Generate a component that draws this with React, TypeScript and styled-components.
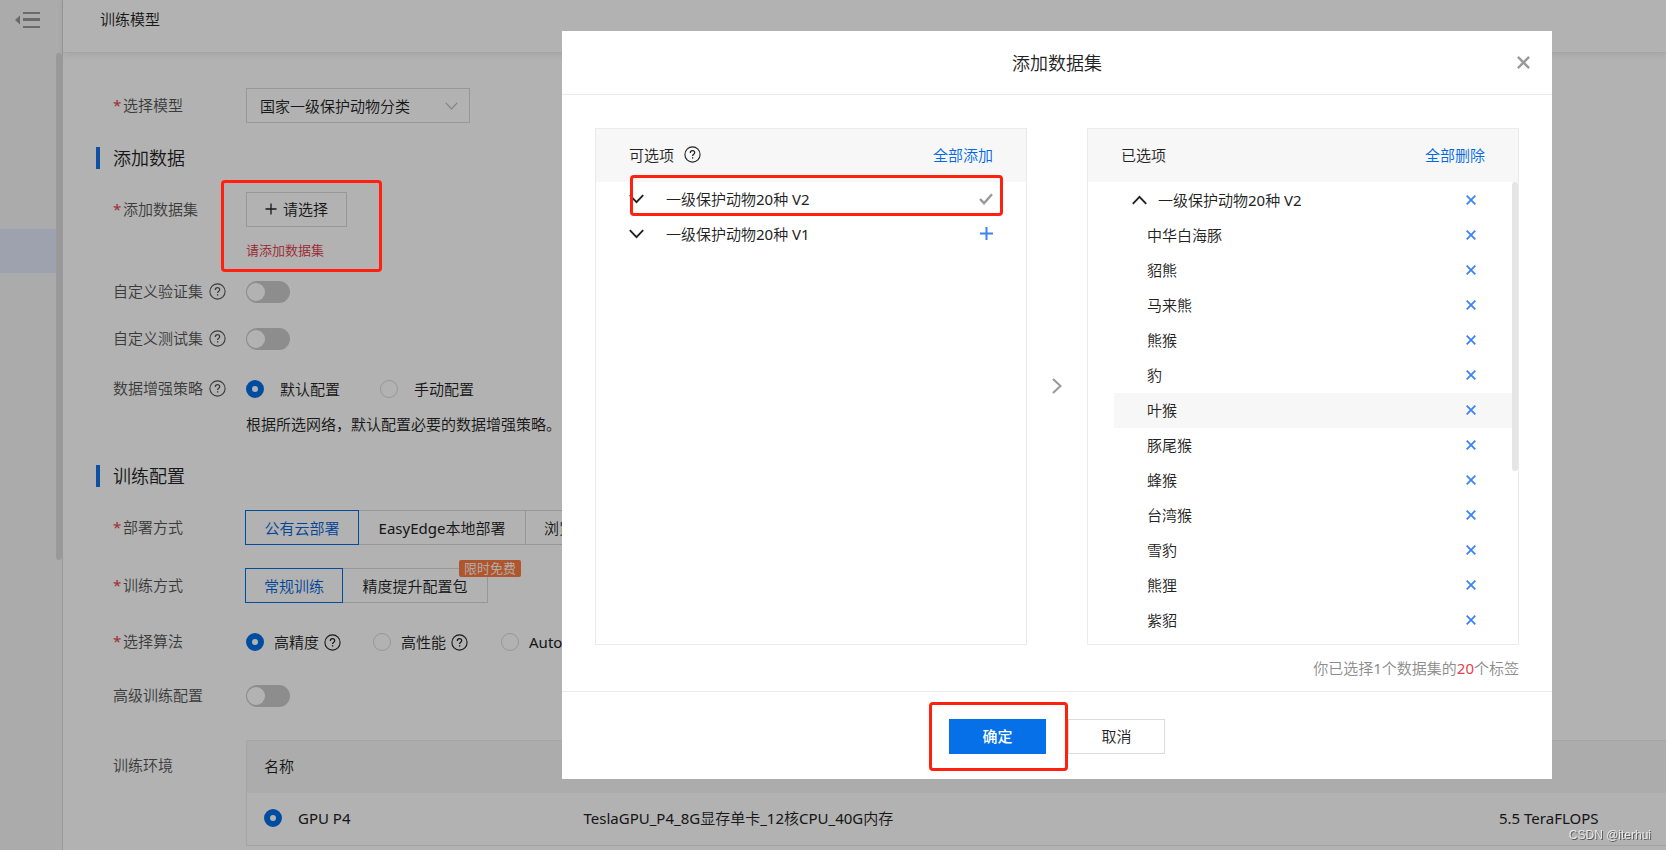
import React, { useState } from "react";
import styled, { createGlobalStyle, css } from "styled-components";

const Global = createGlobalStyle`
  *, *::before, *::after { box-sizing: border-box; }
  html, body, #root { height: 100%; }
  body {
    margin: 0;
    overflow: hidden;
    background: #fff;
    color: #222;
    font: 400 15px/20px "Noto Sans", "Noto Sans CJK SC DemiLight", "Noto Sans CJK SC", sans-serif;
  }
  button, input, select { font: inherit; color: inherit; }
  button { cursor: pointer; padding: 0; border: 0; background: none; }
  a { color: #0068e4; text-decoration: none; }
`;

/* ---------- icons ---------- */

const Icon = styled.svg`
  display: block;
  flex: none;
  fill: none;
  stroke: currentColor;
`;

const HelpIcon = () => (
  <Icon width="17" height="17" viewBox="0 0 17 17" aria-label="帮助">
    <circle cx="8.500" cy="8.500" r="7.600" strokeWidth="1.100" />
    <path d="M6.300 6.900c0-1.400 1-2.200 2.200-2.200s2.200.8 2.200 2c0 1.500-2.100 1.500-2.100 3.200" strokeWidth="1.200" />
    <path d="M8.600 11.200v1.400" strokeWidth="1.300" />
  </Icon>
);

const CrossIcon = ({ size = 10 }: { size?: number }) => (
  <Icon width={size} height={size} viewBox="0 0 10 10">
    <path d="M.7.7l8.600 8.600M9.300.7L.7 9.300" strokeWidth="1.800" />
  </Icon>
);

const ChevronIcon = ({ up }: { up?: boolean }) => (
  <Icon width="15" height="10" viewBox="0 0 15 10">
    <path d={up ? "M.8 8.800l6.700-6.900 6.700 6.900" : "M.8 1.200l6.700 6.900 6.700-6.900"} strokeWidth="1.900" />
  </Icon>
);

/* ---------- page ---------- */

const Shell = styled.div`
  display: flex;
  height: 100%;
`;

const Sidebar = styled.aside`
  flex: none;
  width: 63px;
  background: #f5f5f5;
  border-right: 1px solid #dcdcdc;
`;

const CollapseButton = styled.button`
  display: block;
  height: 53px;
  padding: 12px 0 25px 15px;
  color: #999;
`;

const SideScroll = styled.div`
  display: flex;
  justify-content: space-between;
  height: 507px;
`;

const SideItem = styled.a`
  flex: 1;
  height: 44px;
  margin-top: 176px;
  background: #e1e8f9;
`;

const Thumb = styled.div<{ $color: string; $height: number }>`
  flex: none;
  width: 6px;
  height: ${(p) => p.$height}px;
  border-radius: 3px;
  background: ${(p) => p.$color};
`;

const Main = styled.main`
  flex: 1;
  min-width: 0;
`;

const Header = styled.header`
  height: 53px;
  padding: 9px 37px;
  border-bottom: 1px solid #ececec;
  box-shadow: 0 2px 6px rgba(0, 0, 0, 0.08);
`;

const PageTitle = styled.h1`
  margin: 0;
  font-size: 15px;
  line-height: 20px;
  font-weight: inherit;
`;

const Form = styled.form`
  padding: 35px 0 0 33px;
`;

const SectionTitle = styled.h2`
  display: flex;
  align-items: center;
  gap: 13px;
  height: 22px;
  margin: 24px 0 23px;
  font-size: 18px;
  font-weight: inherit;
  &::before {
    content: "";
    width: 4px;
    height: 22px;
    background: #1673e8;
  }
`;

const Row = styled.div<{ $gap?: number; $height?: number }>`
  display: flex;
  align-items: center;
  height: ${(p) => p.$height ?? 35}px;
  margin-bottom: ${(p) => p.$gap ?? 0}px;
  padding-left: 17px;
`;

const Label = styled.label<{ $required?: boolean }>`
  display: flex;
  align-items: center;
  flex: none;
  gap: ${(p) => (p.$required ? 4 : 6)}px;
  width: 133px;
  padding-bottom: 2px;
  color: #555;
  ${(p) =>
    p.$required &&
    css`
      &::before {
        content: "*";
        width: 6px;
        color: #e8404f;
      }
    `}
`;

const SelectBox = styled.div`
  display: grid;
  align-items: center;
  width: 224px;
  color: #bbb;
  & > * { grid-area: 1 / 1; }
  & > svg { justify-self: end; margin-right: 12px; pointer-events: none; }
`;

const Select = styled.select`
  width: 100%;
  height: 35px;
  padding: 0 13px;
  border: 1px solid #d9d9d9;
  border-radius: 0;
  background: #fff;
  color: #222;
  appearance: none;
`;

const OutlineButton = styled.button`
  display: flex;
  align-items: center;
  justify-content: center;
  gap: 6px;
  width: 101px;
  height: 35px;
  padding-bottom: 2px;
  border: 1px solid #d9d9d9;
`;

const ErrorText = styled.p`
  margin: 0 0 21px 150px;
  padding-top: 13px;
  font-size: 13px;
  line-height: 20px;
  color: #e03446;
`;

const Switch = styled.input`
  appearance: none;
  display: flex;
  align-items: center;
  width: 44px;
  height: 22px;
  margin: 0;
  padding: 0 1px;
  border-radius: 11px;
  background: #cbcbcb;
  &::before {
    content: "";
    width: 18px;
    height: 18px;
    border-radius: 50%;
    background: #fff;
  }
  &:checked { justify-content: flex-end; background: #006fe6; }
`;

const Radio = styled.input`
  appearance: none;
  flex: none;
  width: 18px;
  height: 18px;
  margin: 0;
  border: 1px solid #d9d9d9;
  border-radius: 50%;
  background: #fff;
  &:checked { border: 6px solid #006fe6; }
`;

const RadioLabel = styled.label<{ $gap: number; $after: number }>`
  display: flex;
  align-items: center;
  gap: ${(p) => p.$gap}px;
  margin-right: ${(p) => p.$after}px;
  white-space: nowrap;
`;

const WithHelp = styled.span`
  display: flex;
  align-items: center;
  gap: 5px;
`;

const Hint = styled.p`
  margin: 0 0 31px 150px;
`;

const Segments = styled.div`
  display: flex;
  margin-left: -1px;
`;

const Segment = styled.button<{ $active?: boolean; $width: number }>`
  position: relative;
  width: ${(p) => p.$width}px;
  height: 35px;
  border: 1px solid ${(p) => (p.$active ? "#006fe6" : "#d9d9d9")};
  border-left-width: ${(p) => (p.$active ? 1 : 0)}px;
  color: ${(p) => (p.$active ? "#0064dc" : "#222")};
  white-space: nowrap;
`;

const Badge = styled.span`
  position: absolute;
  top: -9px;
  right: -34px;
  padding: 0 5px;
  border-radius: 2px;
  background: #fb7b41;
  color: #fff;
  font-size: 13px;
  line-height: 17px;
`;

const EnvRow = styled.div`
  display: flex;
  align-items: flex-start;
  padding: 13px 0 0 17px;
  & > label { padding-top: 15px; }
`;

const EnvTable = styled.table`
  flex: 1;
  min-width: 0;
  table-layout: fixed;
  border-collapse: collapse;
  border: 1px solid #ececec;
  border-right: 0;
  th, td {
    height: 53px;
    padding: 0 0 2px 17px;
    border-bottom: 1px solid #e9e9e9;
    text-align: left;
    font-weight: inherit;
    white-space: nowrap;
  }
  th { height: 52px; background: #f6f6f6; border-bottom: 0; }
`;

/* ---------- dialog ---------- */

const Overlay = styled.div`
  position: fixed;
  inset: 0;
  display: flex;
  align-items: flex-start;
  justify-content: flex-end;
  padding: 31px 114px 0 0;
  background: rgba(0, 0, 0, 0.3);
`;

const Dialog = styled.section`
  width: 990px;
  background: #fff;
`;

const DialogHead = styled.header`
  display: grid;
  grid-template-columns: 1fr auto 1fr;
  align-items: center;
  height: 64px;
  padding: 0 22px;
  border-bottom: 1px solid #ebebeb;
`;

const DialogTitle = styled.h2`
  grid-column: 2;
  margin: 0;
  font-size: 18px;
  line-height: 24px;
  font-weight: inherit;
`;

const CloseButton = styled.button`
  justify-self: end;
  color: #999;
`;

const DialogBody = styled.div`
  padding: 33px 33px 0;
`;

const Transfer = styled.div`
  display: grid;
  grid-template-columns: 1fr 60px 1fr;
  height: 517px;
`;

const Panel = styled.div`
  border: 1px solid #ebebeb;
`;

const PanelHead = styled.div`
  display: flex;
  align-items: center;
  justify-content: space-between;
  height: 53px;
  padding: 0 33px 2px;
  background: #f7f7f7;
`;

const PanelTitle = styled.span`
  display: flex;
  align-items: center;
  gap: 10px;
`;

const Middle = styled.div`
  display: grid;
  place-items: center;
  padding-bottom: 2px;
  color: #999;
`;

const Scroller = styled.div`
  display: flex;
`;

const List = styled.ul<{ $top?: number }>`
  flex: 1;
  margin: 0;
  padding: ${(p) => p.$top ?? 0}px 0 0;
  list-style: none;
`;

const Item = styled.li<{ $kind: "source" | "parent" | "child"; $hover?: boolean }>`
  display: flex;
  align-items: center;
  height: 35px;
  gap: ${(p) => (p.$kind === "source" ? 22 : 11)}px;
  ${(p) => p.$kind === "source" && "padding: 0 33px 2px;"}
  ${(p) => p.$kind === "parent" && "margin-left: 26px; padding: 0 36px 2px 18px;"}
  ${(p) => p.$kind === "child" && "margin-left: 26px; padding: 0 36px 2px 33px;"}
  background: ${(p) => (p.$hover ? "#f7f7f7" : "transparent")};
`;

const ItemName = styled.span`
  flex: 1;
`;

const ItemAction = styled.button<{ $muted?: boolean }>`
  color: ${(p) => (p.$muted ? "#999" : "#3b82f6")};
`;

const Summary = styled.p`
  margin: 0;
  padding: 13px 0;
  text-align: right;
  color: #8c8c8c;
  em { font-style: normal; color: #e8404f; }
`;

const DialogFoot = styled.footer`
  display: flex;
  justify-content: center;
  gap: 22px;
  padding: 27px 0 25px;
  border-top: 1px solid #ebebeb;
`;

const FootButton = styled.button<{ $primary?: boolean }>`
  width: 97px;
  height: 35px;
  padding-bottom: 2px;
  border: 1px solid ${(p) => (p.$primary ? "#0570e8" : "#dcdcdc")};
  background: ${(p) => (p.$primary ? "#0570e8" : "#fff")};
  color: ${(p) => (p.$primary ? "#fff" : "#222")};
  ${(p) => p.$primary && 'font-family: "Noto Sans", "Noto Sans CJK SC", sans-serif; font-weight: 500;'}
`;

/* ---------- annotations laid over the page ---------- */

const Mark = styled.div<{ $x: number; $y: number; $w: number; $h: number }>`
  position: absolute;
  left: ${(p) => p.$x}px;
  top: ${(p) => p.$y}px;
  width: ${(p) => p.$w}px;
  height: ${(p) => p.$h}px;
  border: 3px solid #ff2010;
  border-radius: 4px;
  pointer-events: none;
`;

const Watermark = styled.div`
  position: fixed;
  right: 15px;
  bottom: 7px;
  font: 400 12px/16px "Liberation Sans", Arial, sans-serif;
  color: rgba(255, 255, 255, 0.75);
  text-shadow: 1px 1px 0 rgba(0, 0, 0, 0.5);
`;

const animals = ["中华白海豚", "貂熊", "马来熊", "熊猴", "豹", "叶猴", "豚尾猴", "蜂猴", "台湾猴", "雪豹", "熊狸", "紫貂"];

export default function App() {
  const [augment, setAugment] = useState("default");
  const [algo, setAlgo] = useState("precision");

  return (
    <>
      <Global />
      <Shell>
        <Sidebar>
          <CollapseButton aria-label="收起菜单">
            <Icon width="26" height="16" viewBox="0 0 26 16">
              <path d="M8 1h17M8 15h17" strokeWidth="2" />
              <path d="M8 7.500h17" strokeWidth="3" />
              <path d="M5 3.500v9L0 8z" fill="currentColor" stroke="none" />
            </Icon>
          </CollapseButton>
          <SideScroll>
            <SideItem href="#train" aria-label="训练模型" />
            <Thumb $color="#dcdcdc" $height={507} />
          </SideScroll>
        </Sidebar>
        <Main>
          <Header>
            <PageTitle>训练模型</PageTitle>
          </Header>
          <Form onSubmit={(e) => e.preventDefault()}>
            <Row>
              <Label $required htmlFor="model">选择模型</Label>
              <SelectBox>
                <Select id="model">
                  <option>国家一级保护动物分类</option>
                </Select>
                <Icon width="13" height="8" viewBox="0 0 13 8">
                  <path d="M.8.8l5.700 6 5.700-6" strokeWidth="1.200" />
                </Icon>
              </SelectBox>
            </Row>

            <SectionTitle>添加数据</SectionTitle>
            <Row>
              <Label $required htmlFor="dataset">添加数据集</Label>
              <OutlineButton type="button" id="dataset">
                <Icon width="12" height="12" viewBox="0 0 12 12">
                  <path d="M6 .5v11M.5 6h11" strokeWidth="1.300" />
                </Icon>
                请选择
              </OutlineButton>
            </Row>
            <ErrorText>请添加数据集</ErrorText>
            <Row $height={22} $gap={25}>
              <Label htmlFor="val">自定义验证集<HelpIcon /></Label>
              <Switch type="checkbox" role="switch" id="val" />
            </Row>
            <Row $height={22} $gap={28}>
              <Label htmlFor="test">自定义测试集<HelpIcon /></Label>
              <Switch type="checkbox" role="switch" id="test" />
            </Row>
            <Row $height={22} $gap={14}>
              <Label as="span">数据增强策略<HelpIcon /></Label>
              <RadioLabel $gap={16} $after={40}>
                <Radio type="radio" name="augment" checked={augment === "default"} onChange={() => setAugment("default")} />
                默认配置
              </RadioLabel>
              <RadioLabel $gap={16} $after={0}>
                <Radio type="radio" name="augment" checked={augment === "manual"} onChange={() => setAugment("manual")} />
                手动配置
              </RadioLabel>
            </Row>
            <Hint>根据所选网络，默认配置必要的数据增强策略。</Hint>

            <SectionTitle>训练配置</SectionTitle>
            <Row $gap={23}>
              <Label as="span" $required>部署方式</Label>
              <Segments>
                <Segment type="button" $active $width={114}>公有云部署</Segment>
                <Segment type="button" $width={167}>EasyEdge本地部署</Segment>
                <Segment type="button" $width={112}>浏览器部署</Segment>
              </Segments>
            </Row>
            <Row $gap={29}>
              <Label as="span" $required>训练方式</Label>
              <Segments>
                <Segment type="button" $active $width={98}>常规训练</Segment>
                <Segment type="button" $width={145}>
                  精度提升配置包
                  <Badge>限时免费</Badge>
                </Segment>
              </Segments>
            </Row>
            <Row $height={20} $gap={33}>
              <Label as="span" $required>选择算法</Label>
              <RadioLabel $gap={10} $after={32}>
                <Radio type="radio" name="algo" checked={algo === "precision"} onChange={() => setAlgo("precision")} />
                <WithHelp>高精度<HelpIcon /></WithHelp>
              </RadioLabel>
              <RadioLabel $gap={10} $after={33}>
                <Radio type="radio" name="algo" checked={algo === "speed"} onChange={() => setAlgo("speed")} />
                <WithHelp>高性能<HelpIcon /></WithHelp>
              </RadioLabel>
              <RadioLabel $gap={10} $after={0}>
                <Radio type="radio" name="algo" checked={algo === "auto"} onChange={() => setAlgo("auto")} />
                AutoDL Transfer
              </RadioLabel>
            </Row>
            <Row $height={22} $gap={20}>
              <Label htmlFor="advanced">高级训练配置</Label>
              <Switch type="checkbox" role="switch" id="advanced" />
            </Row>
            <EnvRow>
              <Label htmlFor="gpu">训练环境</Label>
              <EnvTable>
                <colgroup>
                  <col width="320" />
                  <col />
                  <col width="184" />
                </colgroup>
                <thead>
                  <tr><th>名称</th><th /><th /></tr>
                </thead>
                <tbody>
                  <tr>
                    <td>
                      <RadioLabel $gap={16} $after={0}>
                        <Radio type="radio" name="env" id="gpu" defaultChecked />
                        GPU P4
                      </RadioLabel>
                    </td>
                    <td>TeslaGPU_P4_8G显存单卡_12核CPU_40G内存</td>
                    <td>5.5 TeraFLOPS</td>
                  </tr>
                </tbody>
              </EnvTable>
            </EnvRow>
          </Form>
        </Main>
      </Shell>

      <Overlay>
        <Dialog role="dialog" aria-modal="true" aria-labelledby="dialog-title">
          <DialogHead>
            <DialogTitle id="dialog-title">添加数据集</DialogTitle>
            <CloseButton aria-label="关闭"><CrossIcon size={13} /></CloseButton>
          </DialogHead>
          <DialogBody>
            <Transfer>
              <Panel>
                <PanelHead>
                  <PanelTitle>可选项<HelpIcon /></PanelTitle>
                  <a href="#add-all">全部添加</a>
                </PanelHead>
                <List>
                  <Item $kind="source">
                    <ChevronIcon />
                    <ItemName>一级保护动物20种 V2</ItemName>
                    <ItemAction $muted aria-label="已添加">
                      <Icon width="14" height="12" viewBox="0 0 14 12">
                        <path d="M1 6l4 4.200L13 1.200" strokeWidth="2.400" />
                      </Icon>
                    </ItemAction>
                  </Item>
                  <Item $kind="source">
                    <ChevronIcon />
                    <ItemName>一级保护动物20种 V1</ItemName>
                    <ItemAction aria-label="添加">
                      <Icon width="13" height="13" viewBox="0 0 13 13">
                        <path d="M6.500 0v13M0 6.500h13" strokeWidth="2" />
                      </Icon>
                    </ItemAction>
                  </Item>
                </List>
              </Panel>
              <Middle>
                <Icon width="10" height="16" viewBox="0 0 10 16">
                  <path d="M1 1l7.500 7L1 15" strokeWidth="2" />
                </Icon>
              </Middle>
              <Panel>
                <PanelHead>
                  <PanelTitle>已选项</PanelTitle>
                  <a href="#remove-all">全部删除</a>
                </PanelHead>
                <Scroller>
                  <List $top={1}>
                    <Item $kind="parent">
                      <ChevronIcon up />
                      <ItemName>一级保护动物20种 V2</ItemName>
                      <ItemAction aria-label="删除"><CrossIcon /></ItemAction>
                    </Item>
                    {animals.map((name) => (
                      <Item key={name} $kind="child" $hover={name === "叶猴"}>
                        <ItemName>{name}</ItemName>
                        <ItemAction aria-label={`删除${name}`}><CrossIcon /></ItemAction>
                      </Item>
                    ))}
                  </List>
                  <Thumb $color="#e5e5e5" $height={289} />
                </Scroller>
              </Panel>
            </Transfer>
            <Summary>你已选择1个数据集的<em>20</em>个标签</Summary>
          </DialogBody>
          <DialogFoot>
            <FootButton $primary>确定</FootButton>
            <FootButton>取消</FootButton>
          </DialogFoot>
        </Dialog>
      </Overlay>

      <Mark $x={221} $y={180} $w={161} $h={92} />
      <Mark $x={630} $y={175} $w={373} $h={41} />
      <Mark $x={929} $y={702} $w={139} $h={69} />
      <Watermark>CSDN @iterhui</Watermark>
    </>
  );
}
